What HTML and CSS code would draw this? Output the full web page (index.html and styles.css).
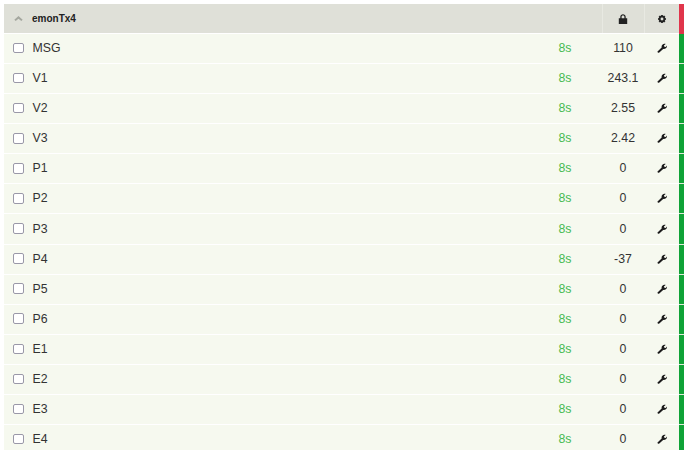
FILE: index.html
```html
<!DOCTYPE html>
<html lang="en">
<head>
<meta charset="utf-8">
<title>emonTx4</title>
<link rel="stylesheet" href="styles.css">
</head>
<body>
<svg class="defs" width="0" height="0" aria-hidden="true">
  <symbol id="wrench" viewBox="0 0 12 12"><path d="M0.6 10.2 L5.6 5.4 C5.2 3.6 6 1.6 8.6 1 C9.3 .9 10 1 10.4 1.2 L8.3 3 L8.9 4.4 L10.4 4.7 L11.9 2.9 C12.2 5 11 7.4 7.4 7.2 L2.4 11.8 C1.7 12 .3 11.2 .6 10.2 Z"/></symbol>
</svg>
<main class="node">
  <section class="list">
    <header class="head">
      <span class="caret"><svg viewBox="0 0 10 6" width="9" height="5"><path d="M5 0 L10 4.4 L8.4 6 L5 3.4 L1.6 6 L0 4.4 Z"/></svg></span>
      <span class="title">emonTx4</span>
      <span class="hcell lock"><svg viewBox="0 0 10 10" width="10" height="10"><path d="M2.3 4.2 V2.8 C2.3 -.6 7.7 -.6 7.7 2.8 V4.2 H9.2 V10 H.8 V4.2 Z M3.6 4.2 H6.4 V2.8 C6.4 1 3.6 1 3.6 2.8 Z" fill-rule="evenodd"/></svg></span>
      <span class="hcell gear"><svg viewBox="0 0 10 10" width="8" height="8"><path d="M5 3.2 A1.8 1.8 0 1 0 5 6.8 A1.8 1.8 0 1 0 5 3.2 Z M4 0 H6 L6.3 1.4 L7.7 .7 L9.2 2.2 L8.5 3.6 L10 4 V6 L8.5 6.4 L9.2 7.8 L7.7 9.3 L6.3 8.6 L6 10 H4 L3.7 8.6 L2.3 9.3 L.8 7.8 L1.5 6.4 L0 6 V4 L1.5 3.6 L.8 2.2 L2.3 .7 L3.7 1.4 Z" fill-rule="evenodd"/></svg></span>
    </header>
    <div class="row"><span class="box"></span><span class="name">MSG</span><span class="age">8s</span><span class="val">110</span><span class="tool"><svg><use href="#wrench"/></svg></span></div>
    <div class="row"><span class="box"></span><span class="name">V1</span><span class="age">8s</span><span class="val">243.1</span><span class="tool"><svg><use href="#wrench"/></svg></span></div>
    <div class="row"><span class="box"></span><span class="name">V2</span><span class="age">8s</span><span class="val">2.55</span><span class="tool"><svg><use href="#wrench"/></svg></span></div>
    <div class="row"><span class="box"></span><span class="name">V3</span><span class="age">8s</span><span class="val">2.42</span><span class="tool"><svg><use href="#wrench"/></svg></span></div>
    <div class="row"><span class="box"></span><span class="name">P1</span><span class="age">8s</span><span class="val">0</span><span class="tool"><svg><use href="#wrench"/></svg></span></div>
    <div class="row"><span class="box"></span><span class="name">P2</span><span class="age">8s</span><span class="val">0</span><span class="tool"><svg><use href="#wrench"/></svg></span></div>
    <div class="row"><span class="box"></span><span class="name">P3</span><span class="age">8s</span><span class="val">0</span><span class="tool"><svg><use href="#wrench"/></svg></span></div>
    <div class="row"><span class="box"></span><span class="name">P4</span><span class="age">8s</span><span class="val">-37</span><span class="tool"><svg><use href="#wrench"/></svg></span></div>
    <div class="row"><span class="box"></span><span class="name">P5</span><span class="age">8s</span><span class="val">0</span><span class="tool"><svg><use href="#wrench"/></svg></span></div>
    <div class="row"><span class="box"></span><span class="name">P6</span><span class="age">8s</span><span class="val">0</span><span class="tool"><svg><use href="#wrench"/></svg></span></div>
    <div class="row"><span class="box"></span><span class="name">E1</span><span class="age">8s</span><span class="val">0</span><span class="tool"><svg><use href="#wrench"/></svg></span></div>
    <div class="row"><span class="box"></span><span class="name">E2</span><span class="age">8s</span><span class="val">0</span><span class="tool"><svg><use href="#wrench"/></svg></span></div>
    <div class="row"><span class="box"></span><span class="name">E3</span><span class="age">8s</span><span class="val">0</span><span class="tool"><svg><use href="#wrench"/></svg></span></div>
    <div class="row"><span class="box"></span><span class="name">E4</span><span class="age">8s</span><span class="val">0</span><span class="tool"><svg><use href="#wrench"/></svg></span></div>
  </section>
  <aside class="status">
    <span class="seg seg-head"></span>
    <span class="seg seg-ok"></span><span class="seg seg-ok"></span><span class="seg seg-ok"></span><span class="seg seg-ok"></span><span class="seg seg-ok"></span><span class="seg seg-ok"></span><span class="seg seg-ok"></span>
    <span class="seg seg-ok"></span><span class="seg seg-ok"></span><span class="seg seg-ok"></span><span class="seg seg-ok"></span><span class="seg seg-ok"></span><span class="seg seg-ok"></span><span class="seg seg-ok"></span>
  </aside>
</main>
</body>
</html>
```
FILE: styles.css
```css
* { box-sizing: border-box; }
html, body { margin: 0; height: 100%; overflow: hidden; background: #fff; }
body { padding: 4px 6px 0 4px; font: 12.3px/18px "Liberation Sans", Arial, sans-serif; color: #333; }
.defs { display: block; height: 0; }
.node { display: flex; align-items: flex-start; }
.list { flex: 1; min-width: 0; }
.head { display: flex; align-items: center; height: 29px; background: #dfe0d8; margin-bottom: 1px; }
.caret { width: 28px; padding-left: 10px; display: flex; fill: #a5a79f; }
.title { flex: 1; font-size: 10px; font-weight: bold; color: #222; }
.hcell { width: 42px; height: 29px; display: flex; align-items: center; justify-content: center; fill: #222; border-left: 1px solid #e8e9e2; }
.lock { padding-right: 2px; }
.gear { width: 35px; padding-right: 1px; }
.row { display: flex; align-items: center; height: 30.08px; padding-bottom: 1px; background: #f6f9ef; border-bottom: 1px solid #fff; }
.box { width: 10.5px; height: 10.5px; margin: 0 9px; border: 1px solid #9a98a8; border-radius: 2px; background: #fff; }
.name { flex: 1; }
.age { width: 44px; margin-right: 15px; color: #46bb52; text-align: center; }
.val { width: 42px; text-align: center; }
.tool { width: 35px; display: flex; justify-content: center; fill: #1c1c1c; }
.tool svg { width: 10px; height: 10px; }
.status { width: 5px; flex: none; display: flex; flex-direction: column; }
.seg { display: block; height: 30.08px; background: #10a337; border-bottom: 1px solid #dfe8d8; }
.seg-head { height: 30px; background: #e0354b; border-bottom: 0; }
```
